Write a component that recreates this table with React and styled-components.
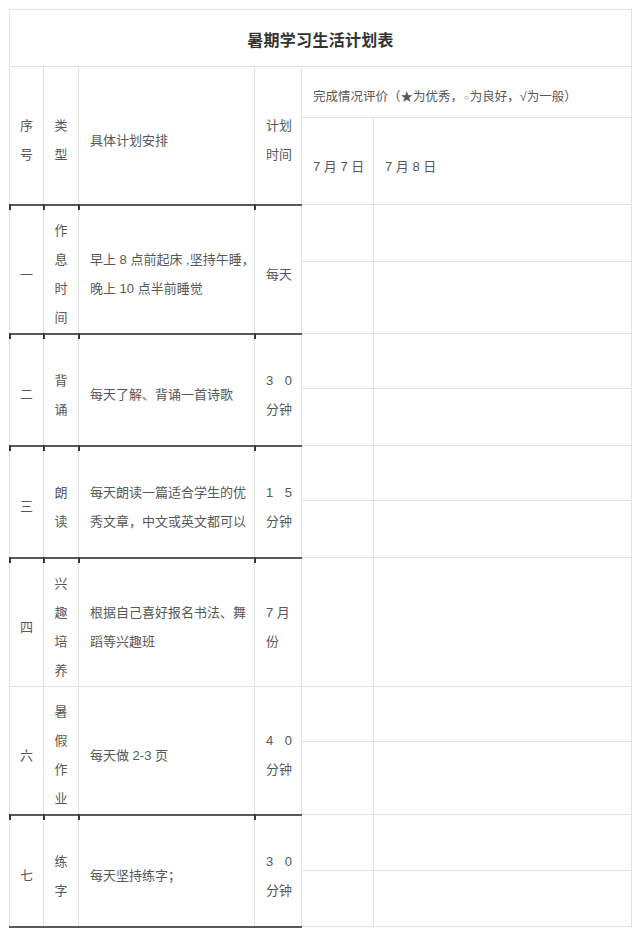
import React from 'react';
import styled, { createGlobalStyle } from 'styled-components';

const GlobalStyle = createGlobalStyle`
  body {
    margin: 0;
    background: #fff;
    font-family: "Liberation Sans", "Noto Sans CJK SC", sans-serif;
  }
`

const LIGHT = '#e2e2e2'
const DARK = '#595959'

const plans = [
  { no: '一', type: '作息时间', lines: ['早上 8 点前起床 ,坚持午睡，', '晚上 10 点半前睡觉'], time: { text: ['每天'] }, rows: [57, 72], dark: true },
  { no: '二', type: '背诵', lines: ['每天了解、背诵一首诗歌'], time: { spread: '3 0', text: ['分钟'] }, rows: [55, 57], dark: true },
  { no: '三', type: '朗读', lines: ['每天朗读一篇适合学生的优', '秀文章，中文或英文都可以'], time: { spread: '1 5', text: ['分钟'] }, rows: [55, 57], dark: true },
  { no: '四', type: '兴趣培养', lines: ['根据自己喜好报名书法、舞', '蹈等兴趣班'], time: { text: ['7 月', '份'] }, rows: [129], dark: true },
  { no: '六', type: '暑假作业', lines: ['每天做 2-3 页'], time: { spread: '4 0', text: ['分钟'] }, rows: [55, 73], dark: false },
  { no: '七', type: '练字', lines: ['每天坚持练字；'], time: { spread: '3 0', text: ['分钟'] }, rows: [56, 56], dark: true, last: true },
]

function App() {
  return (
    <>
      <GlobalStyle />
      <Page>
        <Table>
          <colgroup>
            <col style={{ width: 34 }} />
            <col style={{ width: 35 }} />
            <col style={{ width: 176 }} />
            <col style={{ width: 47 }} />
            <col style={{ width: 72 }} />
            <col style={{ width: 258 }} />
          </colgroup>
          <tbody>
            <Row h={57}>
              <TitleCell colSpan={6}>暑期学习生活计划表</TitleCell>
            </Row>
            <Row h={51}>
              <Cell rowSpan={2} center>序号</Cell>
              <Cell rowSpan={2} center>类型</Cell>
              <Cell rowSpan={2}>具体计划安排</Cell>
              <Cell rowSpan={2}>计划时间</Cell>
              <Cell colSpan={2} small>
                完成情况评价（★为优秀，<Mark>○</Mark>为良好，√为一般）
              </Cell>
            </Row>
            <Row h={87}>
              <Cell>7 月 7 日</Cell>
              <Cell>7 月 8 日</Cell>
            </Row>
            {plans.map(p => (
              <React.Fragment key={p.no}>
                <Row h={p.rows[0]}>
                  <Cell rowSpan={p.rows.length} center dark={p.dark} last={p.last}>{p.no}</Cell>
                  <Cell rowSpan={p.rows.length} center dark={p.dark} last={p.last}>{p.type}</Cell>
                  <Cell rowSpan={p.rows.length} dark={p.dark} last={p.last}>
                    {p.lines.map(l => <Line key={l}>{l}</Line>)}
                  </Cell>
                  <Cell rowSpan={p.rows.length} dark={p.dark} last={p.last}>
                    {p.time.spread && <Spread>{p.time.spread}</Spread>}
                    {p.time.text.map(t => <Line key={t}>{t}</Line>)}
                  </Cell>
                  <Blank />
                  <Blank />
                </Row>
                {p.rows.slice(1).map((h, i) => (
                  <Row h={h} key={i}>
                    <Blank />
                    <Blank />
                  </Row>
                ))}
              </React.Fragment>
            ))}
          </tbody>
        </Table>
      </Page>
    </>
  )
}
export default App

const Page = styled.div`
  padding: 9px 0 0 9px;
`

const Table = styled.table`
  width: 623px;
  table-layout: fixed;
  border-collapse: collapse;
  border: 1px solid ${LIGHT};
`

const Row = styled.tr`
  height: ${p => p.h}px;
`

const TitleCell = styled.td`
  border: 1px solid ${LIGHT};
  text-align: center;
  vertical-align: middle;
  padding-top: 2px;
  font-size: 16px;
  font-weight: bold;
  color: #333;
  letter-spacing: 0.3px;
`

const Cell = styled.td`
  position: relative;
  border: 1px solid ${LIGHT};
  border-top: ${p => p.dark ? `2px solid ${DARK}` : `1px solid ${LIGHT}`};
  border-bottom: ${p => p.last ? `2px solid ${DARK}` : `1px solid ${LIGHT}`};
  padding: ${p => p.center ? '10px 8px 0' : '10px 1px 0 11px'};
  text-align: ${p => p.center ? 'center' : 'left'};
  vertical-align: middle;
  font-size: ${p => p.small ? '12.5px' : '13px'};
  line-height: 29px;
  color: #585858;
  word-break: break-all;

  &::before {
    content: '';
    display: ${p => p.dark ? 'block' : 'none'};
    position: absolute;
    left: -1px;
    top: -2px;
    width: 1.5px;
    height: 6px;
    background: #3a3a3a;
  }
`

const Blank = styled.td`
  border: 1px solid ${LIGHT};
`

const Line = styled.span`
  display: block;
  white-space: nowrap;
`

const Mark = styled.span`
  font-size: 8px;
  margin: 0 1px;
  vertical-align: 1px;
`

const Spread = styled.span`
  display: block;
  width: 26px;
  text-align: justify;
  text-align-last: justify;
`
